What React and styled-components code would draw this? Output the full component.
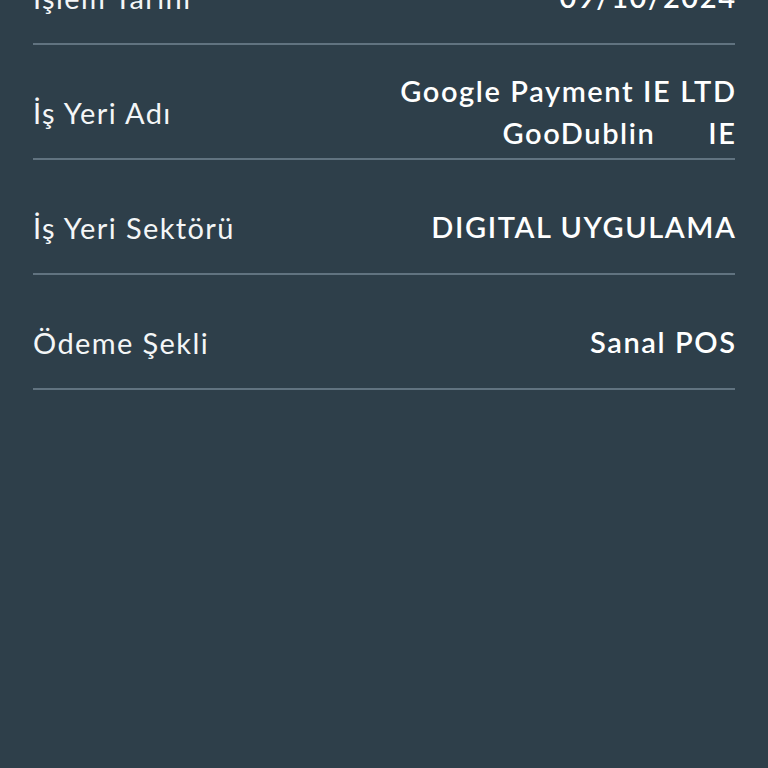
import React from 'react';
import styled, { createGlobalStyle } from 'styled-components';

const GlobalStyle = createGlobalStyle`
  html, body {
    margin: 0;
    padding: 0;
    background: #2e3f4a;
  }
  body {
    font-family: Lato, "Noto Sans", sans-serif;
    color: #ffffff;
    overflow: hidden;
  }
`;

const Screen = styled.div`
  width: 768px;
  height: 768px;
  overflow: hidden;
  background: #2e3f4a;
`;

const List = styled.div`
  display: flex;
  flex-direction: column;
  margin: -70px 33px 0 33px;
`;

const Row = styled.div`
  display: flex;
  align-items: center;
  justify-content: space-between;
  box-sizing: border-box;
  height: 115px;
  padding-top: 21px;
  border-bottom: 2px solid #617380;
`;

const Label = styled.span`
  font-size: 29px;
  font-weight: 400;
  color: #f4f6f7;
  letter-spacing: 1.4px;
`;

const Value = styled.span`
  font-size: 29px;
  font-weight: 600;
  color: #ffffff;
  text-align: right;
  line-height: 42px;
  letter-spacing: 1.6px;
  margin-right: -1.6px;
  white-space: pre;
`;

const rows = [
  { label: 'İşlem Tarihi', value: '09/10/2024' },
  { label: 'İş Yeri Adı', value: 'Google Payment IE LTD\nGooDublin      IE' },
  { label: 'İş Yeri Sektörü', value: 'DIGITAL UYGULAMA' },
  { label: 'Ödeme Şekli', value: 'Sanal POS' },
];

const App = () => {
  return (
    <>
      <GlobalStyle />
      <Screen>
        <List>
          {rows.map((r) => (
            <Row key={r.label}>
              <Label>{r.label}</Label>
              <Value>{r.value}</Value>
            </Row>
          ))}
        </List>
      </Screen>
    </>
  );
};

export default App;
